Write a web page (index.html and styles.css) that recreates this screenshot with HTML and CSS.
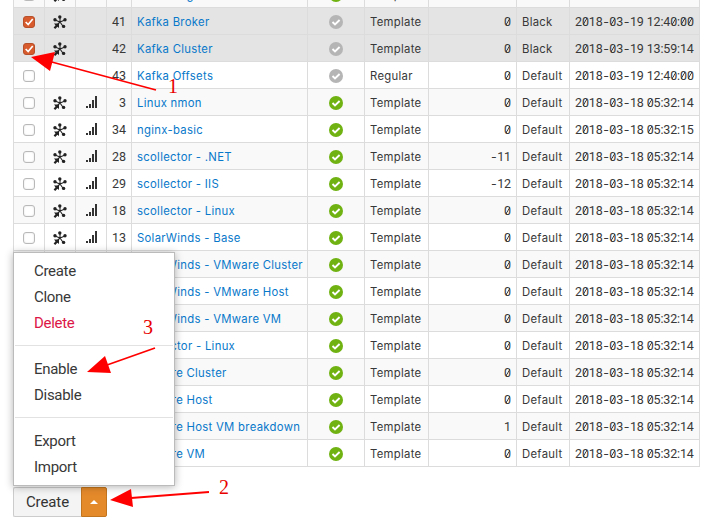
FILE: index.html
```html
<!DOCTYPE html>
<html lang="en">
<head>
<meta charset="utf-8">
<title>Data sources</title>
<link rel="stylesheet" href="styles.css">
</head>
<body>
<svg class="defs" width="0" height="0">
  <symbol id="star" viewBox="0 0 14 14">
    <g stroke="currentColor" stroke-width="1.1" fill="none"><path d="M7 7V2M7 7L2 5M7 7l5-2M7 7l3 4.3M7 7L2 12"/></g>
    <g fill="currentColor"><circle cx="6.8" cy="2" r="1.7"/><circle cx="2" cy="4.8" r="1.7"/><circle cx="12" cy="4.8" r="1.7"/><circle cx="10.6" cy="11.4" r="1.7"/><path d="M1 8.4h5v4.7L4.4 11.8l-2.2 2.1L.6 12.6l2.1-2.1z"/></g>
  </symbol>
  <symbol id="bars" viewBox="0 0 12 12"><path fill="currentColor" d="M0 10h2v2H0zM3 8h2v4H3zM6 4h2v8H6zM9 0h2v12H9z"/></symbol>
  <symbol id="ok" viewBox="0 0 14 14"><circle cx="7" cy="7" r="7" fill="currentColor"/><path d="M3.5 7l2.5 2.5L10.6 5" fill="none" stroke="#fff" stroke-width="1.9"/></symbol>
</svg>
<main class="page">
  <table class="list">
    <colgroup><col class="c-check"><col class="c-icon"><col class="c-icon"><col class="c-id"><col class="c-name"><col class="c-status"><col class="c-type"><col class="c-count"><col class="c-theme"><col class="c-date"></colgroup>
    <tbody id="rows"></tbody>
  </table>
  <div class="actions">
    <button class="create">Create</button><button class="toggle"><i class="caret"></i></button>
    <div class="menu">
      <a>Create</a><a>Clone</a><a class="danger">Delete</a>
      <hr>
      <a>Enable</a><a>Disable</a>
      <hr>
      <a>Export</a><a>Import</a>
    </div>
  </div>
</main>
<svg class="notes" width="708" height="529" viewBox="0 0 708 529">
  <g stroke="#f00" stroke-width="1.8"><path d="M156 90L48 61M155 348l-48 17M209 492l-78 6"/></g>
  <g fill="#f00"><path d="M31 57l24-5-5 19zM87 372l18-16 6 17zM110 500l21-11 2 18z"/></g>
  <g class="labels"><text x="168" y="93">1</text><text x="219" y="494">2</text><text x="143" y="334">3</text></g>
</svg>
<script src="rows.js"></script>
</body>
</html>
```
FILE: rows.js
```js
// id, name, enabled, type, count, theme, date, checked, icons (0 none, 1 star, 2 star and bars)
const data = [
  [40, 'Kafka Logs', 1, 'Template', 0, 'Black', '2018-03-19 12:40:00', 0, 1],
  [41, 'Kafka Broker', 0, 'Template', 0, 'Black', '2018-03-19 12:40:00', 1, 1],
  [42, 'Kafka Cluster', 0, 'Template', 0, 'Black', '2018-03-19 13:59:14', 1, 1],
  [43, 'Kafka Offsets', 0, 'Regular', 0, 'Default', '2018-03-19 12:40:00', 0, 0],
  [3, 'Linux nmon', 1, 'Template', 0],
  [34, 'nginx-basic', 1, 'Template', 0, 'Default', '2018-03-18 05:32:15'],
  [28, 'scollector - .NET', 1, 'Template', -11],
  [29, 'scollector - IIS', 1, 'Template', -12],
  [18, 'scollector - Linux', 1, 'Template', 0],
  [13, 'SolarWinds - Base', 1, 'Template', 0],
  [14, 'SolarWinds - VMware Cluster', 1, 'Template', 0],
  [15, 'SolarWinds - VMware Host', 1, 'Template', 0],
  [16, 'SolarWinds - VMware VM', 1, 'Template', 0],
  [17, 'vcollector - Linux', 1, 'Template', 0],
  [19, 'VMware Cluster', 1, 'Template', 0],
  [20, 'VMware Host', 1, 'Template', 0],
  [21, 'VMware Host VM breakdown', 1, 'Template', 1],
  [22, 'VMware VM', 1, 'Template', 0],
];
const use = (id, cls) => `<svg class="${cls}"><use href="#${id}"/></svg>`;
const glyphs = { '0': 'zero', '-': 'dash', ' ': 'gap' };
const num = s => String(s).replace(/[0 -]/g, c => `<b class="${glyphs[c]}">${c}</b>`);
document.getElementById('rows').innerHTML = data.map(
  ([id, name, on, type, count, theme = 'Default', date = '2018-03-18 05:32:14', checked = 0, icons = 2]) => `
  <tr class="${checked ? 'selected' : ''}">
    <td><span class="box ${checked ? 'checked' : ''}">${checked ? '<svg viewBox="0 0 12 12"><path d="M2 6l3 3L10.5 2.5"/></svg>' : ''}</span></td>
    <td>${icons ? use('star', 'star') : ''}</td>
    <td>${icons > 1 ? use('bars', 'bars') : ''}</td>
    <td class="id">${id}</td>
    <td class="name">${name}</td>
    <td>${use('ok', on ? 'ok on' : 'ok')}</td>
    <td class="text">${type}</td>
    <td class="count">${num(count)}</td>
    <td class="text">${theme}</td>
    <td class="date">${num(date)}</td>
  </tr>`).join('');
```
FILE: styles.css
```css
* { box-sizing: border-box; }
html, body { margin: 0; height: 529px; overflow: hidden; background: #fff; }
body { position: relative; color: #383838; font-family: Roboto, "Liberation Sans", sans-serif; }
.defs { position: absolute; }
.page { padding-left: 13px; margin-top: -19px; }
.list { width: 687px; table-layout: fixed; border-collapse: separate; border-spacing: 0; border-left: 1px solid #dcdcdc; }
.c-check { width: 31px; } .c-icon { width: 31px; } .c-id { width: 25px; } .c-name { width: 176px; }
.c-status { width: 57px; } .c-type { width: 64px; } .c-count { width: 88px; } .c-theme { width: 53px; } .c-date { width: 130px; }
td { height: 27px; padding: 2px 0 0; border-right: 1px solid #dcdcdc; border-bottom: 1px solid #dcdcdc; text-align: center; white-space: nowrap; line-height: 20px; overflow: hidden; }
tr:nth-child(odd) td { background: #f9f9f9; }
tr:nth-child(even) td { background: #fff; }
tr.selected td { background: #e4e4e4; }
td svg, .box { display: block; margin: 0 auto; }
.star { width: 14px; height: 14px; color: #222; }
.bars { width: 12px; height: 12px; color: #333; position: relative; left: 1px; top: -1px; }
.ok { width: 14px; height: 14px; color: #b5b5b5; }
.ok.on { color: #6fb211; }
.box { width: 12px; height: 12px; border: 1px solid #b9b9b9; border-radius: 3px; background: #fff; box-shadow: inset 0 0 2px #ddd; }
.box.checked { border-color: #b5502b; background: #d75b2c; box-shadow: none; }
.box svg { width: 10px; height: 10px; fill: none; stroke: #fff; stroke-width: 2; }
td.id { text-align: right; padding-right: 5px; font-size: 12.5px; }
td.name, td.text { text-align: left; padding-left: 5px; font: 11.3px/20px Inter, sans-serif; letter-spacing: .3px; }
td.name { color: #0878ca; }
td.count, td.date { font-size: 12.5px; letter-spacing: -.15px; }
td.count { text-align: right; padding-right: 5px; }
td.date { text-align: left; padding-left: 5px; }
td b { font-weight: inherit; }
.zero { background: linear-gradient(118deg, transparent 42%, #444 45%, #444 55%, transparent 58%) center / 4px 7px no-repeat; }
.dash { display: inline-block; width: 6.8px; line-height: 14px; text-align: center; font-family: Inter, sans-serif; }
.gap { display: inline-block; width: 3px; }
.actions { position: relative; display: flex; margin-top: 20px; }
button { height: 30px; margin: 0; padding: 0; font: 15px Roboto, sans-serif; letter-spacing: -.1px; color: #333; }
.create { width: 68px; border: 1px solid #ccc; border-right: 0; border-radius: 2px 0 0 2px; background: #f4f4f4; }
.toggle { width: 26px; display: flex; align-items: center; justify-content: center; border: 1px solid #c2751f; border-radius: 0 2px 2px 0; background: #e58a2b; }
.caret { border: 4px solid transparent; border-top: 0; border-bottom-color: #fff; }
.menu { position: absolute; left: 0; bottom: 31px; width: 162px; height: 234px; padding: 5px 1px; border: 1px solid #bbb; background: #fff; box-shadow: 0 1px 8px rgba(0,0,0,.3); }
.menu a { display: block; height: 26px; padding-left: 19px; font-size: 15px; line-height: 26px; letter-spacing: -.3px; }
.menu .danger { color: #dc1748; }
.menu hr { height: 1px; margin: 9px 0 10px; border: 0; background: #e2e2e2; }
.notes { position: absolute; left: 0; top: 0; pointer-events: none; }
.labels { font: 20px "Liberation Serif", serif; fill: #e80000; }
```
